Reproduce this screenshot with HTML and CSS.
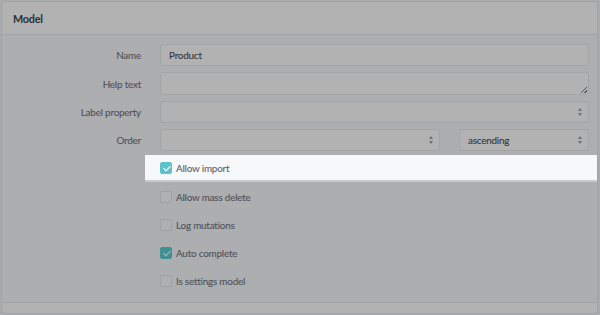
FILE: index.html
```html
<!DOCTYPE html>
<html>
<head>
<meta charset="utf-8">
<link rel="stylesheet" href="styles.css">
</head>
<body>
<div class="panel">
  <div class="panel-header">Model</div>
  <div class="panel-body">
    <div class="form-grid">
      <label class="lbl">Name</label>
      <div class="field"><div class="input">Product</div></div>

      <label class="lbl">Help text</label>
      <div class="field"><div class="input textarea"><span class="grip"></span></div></div>

      <label class="lbl">Label property</label>
      <div class="field"><div class="input select"><span class="arrows"></span></div></div>

      <label class="lbl">Order</label>
      <div class="field order">
        <div class="input select grow"><span class="arrows"></span></div>
        <div class="input select dir">ascending<span class="arrows"></span></div>
      </div>
    </div>

    <div class="checks">
      <div class="check-row highlight"><span class="box checked"></span><span class="ctext">Allow import</span></div>
      <div class="check-row"><span class="box"></span><span class="ctext">Allow mass delete</span></div>
      <div class="check-row"><span class="box"></span><span class="ctext">Log mutations</span></div>
      <div class="check-row"><span class="box checked dim"></span><span class="ctext">Auto complete</span></div>
      <div class="check-row"><span class="box"></span><span class="ctext">Is settings model</span></div>
    </div>
  </div>
  <div class="panel-footer"></div>
</div>
</body>
</html>
```

FILE: styles.css
```css
html, body {
  margin: 0;
  padding: 0;
  background: #a9aaac;
  width: 600px;
  height: 315px;
  overflow: hidden;
  font-family: Lato, "Open Sans", sans-serif;
}

.panel {
  width: 595px;
  margin: 1px 0 0 1px;
  border: 1px solid #a2a3a6;
  border-radius: 4px;
  background: #adaeb0;
}

.panel-header {
  height: 32px;
  padding-left: 11px;
  display: flex;
  align-items: center;
  background: #b2b2b3;
  border-bottom: 1px solid #a2a3a6;
  border-radius: 4px 4px 0 0;
  font-size: 10.8px;
  letter-spacing: -0.2px;
  font-weight: 700;
  color: #2c2e36;
}

.panel-body {
  padding: 9px 0 8px 0;
}

.form-grid {
  display: grid;
  grid-template-columns: 139px 1fr;
  column-gap: 19px;
  row-gap: 6px;
  padding-right: 8px;
}

.lbl {
  font-size: 9.9px;
  letter-spacing: -0.2px;
  color: #4f515a;
  text-align: right;
  align-self: center;
  -webkit-text-stroke: 0.1px #4f515a;
}

.field {
  display: flex;
}

.field.order {
  gap: 19px;
}

.input {
  box-sizing: border-box;
  height: 22px;
  flex: 1;
  border: 1px solid #a3a4a6;
  border-radius: 3px;
  background: #b2b2b3;
  font-size: 9.9px;
  letter-spacing: -0.2px;
  color: #33353d;
  -webkit-text-stroke: 0.1px #33353d;
  padding-left: 8px;
  display: flex;
  align-items: center;
  position: relative;
}

.input.textarea {
  height: 23px;
}

.input.grow {
  flex: 0 0 280px;
}

.input.dir {
  flex: 1;
}

.grip {
  position: absolute;
  right: 1px;
  bottom: 1px;
  width: 6px;
  height: 6px;
  background:
    linear-gradient(135deg, transparent 45%, #55575e 45%, #55575e 55%, transparent 55%) 0 0 / 6px 6px no-repeat,
    linear-gradient(135deg, transparent 72%, #55575e 72%, #55575e 84%, transparent 84%) 0 0 / 6px 6px no-repeat;
}

.arrows {
  position: absolute;
  right: 5px;
  top: 50%;
  width: 5px;
  height: 8px;
  margin-top: -4px;
}

.arrows::before,
.arrows::after {
  content: "";
  position: absolute;
  left: 0;
  border-left: 2.5px solid transparent;
  border-right: 2.5px solid transparent;
}

.arrows::before {
  top: 0;
  border-bottom: 3px solid #6c6e76;
}

.arrows::after {
  bottom: 0;
  border-top: 3px solid #6c6e76;
}

.checks {
  margin-top: 4px;
  display: flex;
  flex-direction: column;
  gap: 1px;
}

.check-row {
  box-sizing: border-box;
  height: 27px;
  margin-left: 143px;
  padding-left: 15px;
  display: flex;
  align-items: center;
  gap: 4px;
  font-size: 9.9px;
  letter-spacing: -0.2px;
  color: #4f515a;
  -webkit-text-stroke: 0.1px #4f515a;
}

.check-row.highlight {
  background: #f7f8fa;
  border-bottom: 2px solid #c9cacd;
  color: #60626b;
  -webkit-text-stroke: 0.1px #60626b;
}

.box {
  box-sizing: border-box;
  width: 12px;
  height: 12px;
  border: 1px solid #a0a1a4;
  border-radius: 2px;
  background: #afb0b2;
  position: relative;
}

.box.checked {
  background: #5cc3c8;
  border-color: #5cc3c8;
}

.box.checked.dim {
  background: #3f8f93;
  border-color: #3f8f93;
}

.box.checked::after {
  content: "";
  position: absolute;
  left: 3.5px;
  top: 1.5px;
  width: 3px;
  height: 6px;
  border-right: 1.3px solid #ffffff;
  border-bottom: 1.3px solid #ffffff;
  transform: rotate(45deg);
}

.box.checked.dim::after {
  border-color: #b0b8ba;
}

.panel-footer {
  height: 10px;
  background: #b2b2b3;
  border-top: 1px solid #a2a3a6;
  border-radius: 0 0 4px 4px;
}
```
